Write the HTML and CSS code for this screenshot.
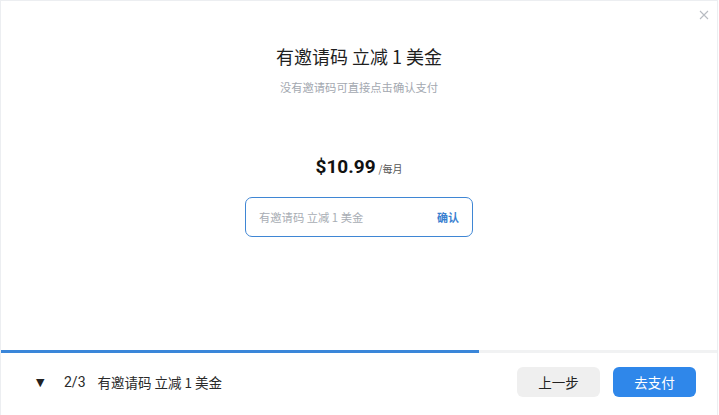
FILE: index.html
```html
<!DOCTYPE html>
<html lang="zh">
<head>
<meta charset="utf-8">
<link rel="stylesheet" href="styles.css">
</head>
<body>
<div class="dialog">
  <button class="close" aria-label="关闭">
    <svg width="10" height="10" viewBox="0 0 10 10"><path d="M1 1L9 9M9 1L1 9" stroke="#b8bcc2" stroke-width="1.1" fill="none"/></svg>
  </button>
  <main class="content">
    <h1 class="title">有邀请码 立减 1 美金</h1>
    <p class="subtitle">没有邀请码可直接点击确认支付</p>
    <div class="price"><span class="amount">$10.99</span><span class="period">/每月</span></div>
    <div class="code-box">
      <input class="code-input" type="text" placeholder="有邀请码 立减 1 美金">
      <span class="confirm">确认</span>
    </div>
  </main>
  <div class="progress"><div class="progress-fill" style="width:66.8%"></div></div>
  <footer class="footer">
    <div class="step">
      <span class="caret">▼</span>
      <span class="step-num">2/3</span>
      <span class="step-name">有邀请码 立减 1 美金</span>
    </div>
    <div class="actions">
      <button class="btn btn-secondary">上一步</button>
      <button class="btn btn-primary">去支付</button>
    </div>
  </footer>
</div>
</body>
</html>
```
FILE: styles.css
```css
* { box-sizing: border-box; }
html, body { margin: 0; padding: 0; background: #fff; }
body {
  font-family: "Noto Sans CJK SC", "Liberation Sans", Arial, sans-serif;
  color: #222;
}
.dialog {
  position: relative;
  width: 718px;
  height: 415px;
  border: 1px solid #eceef1;
  border-bottom: none;
  display: flex;
  flex-direction: column;
  background: #fff;
}
.close {
  position: absolute;
  top: 8px;
  right: 7px;
  width: 12px;
  height: 12px;
  padding: 0;
  border: none;
  background: none;
  display: flex;
  align-items: center;
  justify-content: center;
}
.content {
  flex: 1;
  display: flex;
  flex-direction: column;
  align-items: center;
  padding-top: 43px;
}
.title {
  margin: 0;
  font-size: 18px;
  line-height: 24px;
  font-weight: 400;
  color: #1f1f1f;
}
.subtitle {
  margin: 11px 0 0;
  font-size: 11.3px;
  line-height: 16px;
  color: #a3a8b0;
}
.price {
  margin-top: 60px;
  display: flex;
  align-items: baseline;
  height: 28px;
}
.amount {
  font-family: "Roboto", "Liberation Sans", sans-serif;
  font-size: 19px;
  font-weight: 700;
  color: #111;
}
.period {
  margin-left: 3px;
  font-size: 10px;
  color: #555;
}
.code-box {
  margin-top: 14px;
  width: 228px;
  height: 40px;
  border: 1px solid #3f86d4;
  border-radius: 7px;
  display: flex;
  align-items: center;
  padding: 0 13px 0 13px;
}
.code-input {
  flex: 1;
  min-width: 0;
  border: none;
  outline: none;
  padding: 0;
  font-family: inherit;
  font-size: 11.3px;
  color: #333;
  background: transparent;
}
.code-input::placeholder { color: #a8adb4; }
.confirm {
  font-size: 11px;
  font-weight: 700;
  color: #3a7fd0;
}
.progress {
  height: 3px;
  background: #f1f2f3;
}
.progress-fill {
  height: 100%;
  background: #3a86d9;
}
.footer {
  height: 62px;
  display: flex;
  align-items: center;
  justify-content: space-between;
  padding: 0 21px 4px 35px;
}
.step {
  display: flex;
  align-items: center;
  font-size: 13.5px;
  color: #2a2a2a;
}
.caret {
  font-size: 11px;
  width: 12px;
  color: #222;
  font-family: "DejaVu Sans", sans-serif;
}
.step-num {
  margin-left: 16px;
  font-size: 14px;
  font-family: "Roboto", "Liberation Sans", sans-serif;
}
.step-name { margin-left: 12px; }
.actions {
  display: flex;
  gap: 13px;
}
.btn {
  width: 83px;
  height: 30px;
  border: none;
  border-radius: 6px;
  font-family: inherit;
  font-size: 13.5px;
  padding: 0;
}
.btn-secondary {
  background: #efefef;
  color: #222;
}
.btn-primary {
  background: #2f87ea;
  color: #fff;
}
```
